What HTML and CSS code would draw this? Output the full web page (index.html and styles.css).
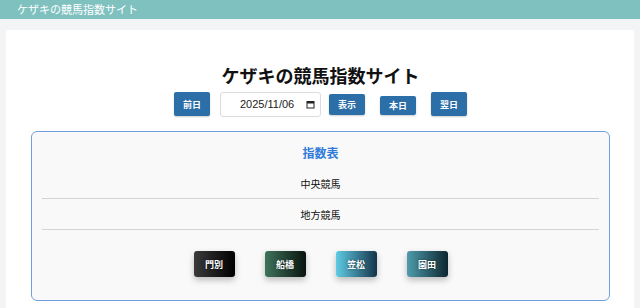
FILE: index.html
```html
<!DOCTYPE html>
<html lang="ja">
<head>
  <meta charset="utf-8">
  <link rel="stylesheet" href="styles.css">
</head>
<body>
  <div class="topbar">ケザキの競馬指数サイト</div>
  <div class="page">
    <h1 class="site-title">ケザキの競馬指数サイト</h1>
    <div class="date-nav">
      <button class="nav-btn btn-prev">前日</button>
      <div class="date-input">
        <span class="date-value">2025/11/06</span>
        <svg class="cal-icon" width="9" height="9" viewBox="0 0 9 9">
          <rect x="1" y="1.5" width="7" height="6.5" fill="none" stroke="#222" stroke-width="1"/>
          <rect x="1" y="1.5" width="7" height="2" fill="#222"/>
        </svg>
      </div>
      <button class="nav-btn btn-show">表示</button>
      <button class="nav-btn btn-today">本日</button>
      <button class="nav-btn btn-next">翌日</button>
    </div>
    <div class="index-box">
      <div class="index-title">指数表</div>
      <div class="index-row">中央競馬</div>
      <div class="index-row">地方競馬</div>
      <div class="tracks">
        <button class="track track-mombetsu">門別</button>
        <button class="track track-funabashi">船橋</button>
        <button class="track track-kasamatsu">笠松</button>
        <button class="track track-sonoda">園田</button>
      </div>
    </div>
  </div>
</body>
</html>
```

FILE: styles.css
```css
/* Base Layout */
body {
  margin: 0;
  background: #f2f4f5;
  font-family: "Noto Sans CJK JP", "Noto Sans", sans-serif;
  color: #111;
}

.topbar {
  height: 19px;
  line-height: 19px;
  padding-left: 17px;
  background: #7fc1bf;
  color: #fff;
  font-size: 11px;
}

.page {
  margin: 11px 6px 0;
  background: #fff;
  padding: 32px 24px 8px 25px;
  box-sizing: border-box;
  height: 278px;
}

.site-title {
  margin: 0;
  text-align: center;
  font-size: 18px;
  line-height: 26px;
  font-weight: bold;
}

/* Date navigation */
.date-nav {
  display: flex;
  justify-content: center;
  align-items: center;
  margin-top: 3px;
  height: 26px;
}

.nav-btn {
  width: 36px;
  height: 24px;
  padding: 0;
  border: none;
  border-radius: 2px;
  background: #2b6ea8;
  color: #fff;
  font-family: inherit;
  font-size: 9px;
  font-weight: bold;
  box-shadow: 0 1px 2px rgba(0, 0, 0, 0.2);
}

.btn-show {
  height: 21px;
  margin-right: 15px;
}

.btn-today {
  height: 19px;
  margin-right: 15px;
  margin-top: 2px;
}

.date-input {
  width: 101px;
  height: 25px;
  box-sizing: border-box;
  margin: 0 8px 0 10px;
  padding: 0 5px 0 19px;
  border: 1px solid #dcdcdc;
  border-radius: 3px;
  background: #fff;
  display: flex;
  align-items: center;
  justify-content: space-between;
  font-family: "Liberation Sans", sans-serif;
  font-size: 11px;
  color: #222;
}

.cal-icon {
  display: block;
}

/* Index box */
.index-box {
  margin-top: 14px;
  border: 1px solid #6f9fe2;
  border-radius: 6px;
  background: #f9f9f9;
  padding: 11px 10px 23px;
}

.index-title {
  text-align: center;
  color: #2f7bdc;
  font-size: 12px;
  font-weight: bold;
  line-height: 20px;
  margin-bottom: 5px;
}

.index-row {
  text-align: center;
  font-size: 10px;
  line-height: 16px;
  padding: 8px 0 6px;
  border-bottom: 1px solid #d4d4d4;
}

.tracks {
  display: flex;
  justify-content: center;
  gap: 30px;
  margin-top: 21px;
}

.track {
  width: 41px;
  height: 26px;
  padding: 0;
  border: none;
  border-radius: 3px;
  color: #fff;
  font-family: inherit;
  font-size: 9px;
  font-weight: bold;
  text-shadow: 0 0 2px rgba(0, 0, 0, 0.6);
  box-shadow: 0 3px 6px rgba(0, 0, 0, 0.25);
}

.track-mombetsu {
  background: linear-gradient(90deg, #3a3a3a, #000);
}

.track-funabashi {
  background: linear-gradient(90deg, #3f735b, #08140f);
}

.track-kasamatsu {
  background: linear-gradient(90deg, #5fcce4, #14344a);
}

.track-sonoda {
  background: linear-gradient(90deg, #4e9cac, #0c2630);
}
```
